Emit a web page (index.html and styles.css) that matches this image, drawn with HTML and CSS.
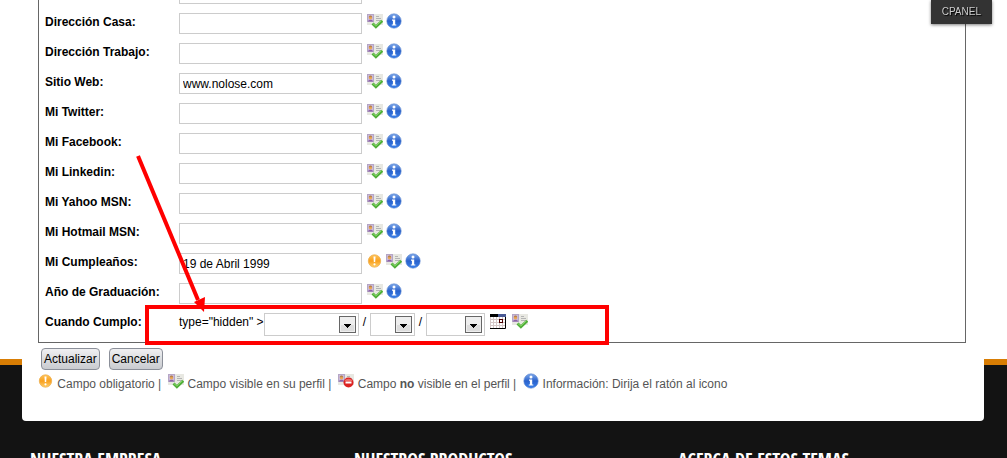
FILE: index.html
```html
<!DOCTYPE html>
<html lang="es">
<head>
    <meta charset="UTF-8">
    <meta name="viewport" content="width=device-width, initial-scale=1.0">
    <title>Editar perfil</title>
    <link rel="stylesheet" href="styles.css">
</head>
<body>

<!-- icons -->
<svg class="sprite" aria-hidden="true">
    <defs>
        <linearGradient id="blue" x1="0" y1="0" x2="0" y2="1">
            <stop offset="0" stop-color="#7fa9ea"/>
            <stop offset="0.5" stop-color="#2a62cc"/>
            <stop offset="1" stop-color="#3a80ea"/>
        </linearGradient>
        <linearGradient id="orange" x1="0" y1="0" x2="0" y2="1">
            <stop offset="0" stop-color="#ffc458"/>
            <stop offset="0.5" stop-color="#f9a01e"/>
            <stop offset="1" stop-color="#ffd06c"/>
        </linearGradient>
    </defs>
    <symbol id="info" viewBox="0 0 16 16">
        <circle cx="8" cy="8" r="7.2" fill="url(#blue)" stroke="#5c86cf" stroke-width="0.6"/>
        <circle cx="8" cy="4" r="1.5" fill="#fff"/>
        <path d="M6 6.6h3.2v4.8h1.1v1.2H5.8v-1.2h1.1V7.8H6z" fill="#fff"/>
    </symbol>
    <symbol id="required" viewBox="0 0 16 16">
        <circle cx="7.5" cy="8" r="6.2" fill="url(#orange)" stroke="#eeb052" stroke-width="0.8"/>
        <path d="M6.5 3.5h2l-.3 5.5H6.8z" fill="#fff"/>
        <circle cx="7.5" cy="11.3" r="1.1" fill="#fff"/>
    </symbol>
    <symbol id="card" viewBox="0 0 16 16">
        <rect width="16" height="11" y="1" fill="#e8e8e2"/>
        <rect x="0.5" y="1.5" width="6" height="7" fill="#cbbcdc" stroke="#b5a6c6"/>
        <path d="M1 8.5c0-2.4 5-2.4 5 0z" fill="#8d62a8"/>
        <circle cx="3.5" cy="4.8" r="1.7" fill="#eda854"/>
        <path d="M1.8 4.2c0-2.4 3.4-2.4 3.4 0z" fill="#b5804c"/>
        <path d="M9 3.5h3M9 5.5h5M9 7.5h5" stroke="#b4b4b4"/>
    </symbol>
    <symbol id="visible" viewBox="0 0 16 16">
        <use href="#card" width="16" height="16"/>
        <path d="M5.5 10.4l3.4 3.4 6.4-6" fill="none" stroke="#4fae38" stroke-width="2.8"/>
        <path d="M6 10.6l2.9 2.4 5.6-5.4" fill="none" stroke="#86d568" stroke-width="1"/>
    </symbol>
    <symbol id="hidden-field" viewBox="0 0 16 16">
        <use href="#card" width="16" height="16"/>
        <circle cx="10.5" cy="9.5" r="5" fill="#dc2222"/>
        <path d="M6.5 8c1-3 7-3 8 0z" fill="#ee6a64"/>
        <rect x="7.5" y="8.5" width="6" height="2" fill="#fff"/>
    </symbol>
    <symbol id="calendar" viewBox="0 0 16 16">
        <rect width="16" height="16" fill="#fff"/>
        <path d="M0 6.5h16M0 9.5h16M0 12.5h16M.5 4v11M3.5 4v11M6.5 4v11M9.5 4v11M12.5 4v11" stroke="#d6c8c8"/>
        <rect y="1" width="8" height="3" fill="#000"/>
        <rect x="8" y="1" width="8" height="3" fill="#4a5a94"/>
        <path d="M15.5 4v11.5H0" fill="none" stroke="#000"/>
        <rect x="9.5" y="6.5" width="3" height="3" fill="#fff" stroke="#4c0000"/>
    </symbol>
</svg>

<a class="cpanel" href="#">CPANEL</a>

<main class="page">
    <form class="profile">
        <div class="fields">
            <div class="row"><span></span><input type="text" aria-label="Dirección"></div>
            <div class="row">
                <label for="casa">Dirección Casa:</label>
                <input type="text" id="casa">
                <svg class="icon"><use href="#visible"/></svg>
                <svg class="icon"><use href="#info"/></svg>
            </div>
            <div class="row">
                <label for="trabajo">Dirección Trabajo:</label>
                <input type="text" id="trabajo">
                <svg class="icon"><use href="#visible"/></svg>
                <svg class="icon"><use href="#info"/></svg>
            </div>
            <div class="row">
                <label for="web">Sitio Web:</label>
                <input type="text" id="web" value="www.nolose.com">
                <svg class="icon"><use href="#visible"/></svg>
                <svg class="icon"><use href="#info"/></svg>
            </div>
            <div class="row">
                <label for="twitter">Mi Twitter:</label>
                <input type="text" id="twitter">
                <svg class="icon"><use href="#visible"/></svg>
                <svg class="icon"><use href="#info"/></svg>
            </div>
            <div class="row">
                <label for="facebook">Mi Facebook:</label>
                <input type="text" id="facebook">
                <svg class="icon"><use href="#visible"/></svg>
                <svg class="icon"><use href="#info"/></svg>
            </div>
            <div class="row">
                <label for="linkedin">Mi Linkedin:</label>
                <input type="text" id="linkedin">
                <svg class="icon"><use href="#visible"/></svg>
                <svg class="icon"><use href="#info"/></svg>
            </div>
            <div class="row">
                <label for="yahoo">Mi Yahoo MSN:</label>
                <input type="text" id="yahoo">
                <svg class="icon"><use href="#visible"/></svg>
                <svg class="icon"><use href="#info"/></svg>
            </div>
            <div class="row">
                <label for="hotmail">Mi Hotmail MSN:</label>
                <input type="text" id="hotmail">
                <svg class="icon"><use href="#visible"/></svg>
                <svg class="icon"><use href="#info"/></svg>
            </div>
            <div class="row">
                <label for="cumple">Mi Cumpleaños:</label>
                <input type="text" id="cumple" value="19 de Abril 1999">
                <svg class="icon"><use href="#required"/></svg>
                <svg class="icon"><use href="#visible"/></svg>
                <svg class="icon"><use href="#info"/></svg>
            </div>
            <div class="row">
                <label for="graduacion">Año de Graduación:</label>
                <input type="text" id="graduacion">
                <svg class="icon"><use href="#visible"/></svg>
                <svg class="icon"><use href="#info"/></svg>
            </div>
            <div class="row">
                <label for="dia">Cuando Cumplo:</label>
                <div class="date">
                    <span class="stray">type="hidden" &gt;</span>
                    <select class="day" id="dia"><option></option></select>
                    <span class="slash">/</span>
                    <select class="month" aria-label="Mes"><option></option></select>
                    <span class="slash">/</span>
                    <select class="year" aria-label="Año"><option></option></select>
                </div>
                <svg class="icon"><use href="#calendar"/></svg>
                <svg class="icon wide"><use href="#visible"/></svg>
            </div>
        </div>

        <div class="actions">
            <button type="submit">Actualizar</button>
            <button type="button">Cancelar</button>
        </div>

        <p class="legend">
            <span><svg class="icon"><use href="#required"/></svg> Campo obligatorio |</span>
            <span><svg class="icon"><use href="#visible"/></svg> Campo visible en su perfil |</span>
            <span><svg class="icon"><use href="#hidden-field"/></svg> Campo <strong>no</strong> visible en el perfil |</span>
            <span><svg class="icon"><use href="#info"/></svg> Información: Dirija el ratón al icono</span>
        </p>
    </form>

    <!-- red marks over the form -->
    <svg class="marks" width="470" height="200" viewBox="0 0 470 200" aria-hidden="true">
        <rect x="12" y="154" width="460" height="36" fill="none" stroke="#f00" stroke-width="4"/>
        <path d="M3 3L63 147" stroke="#f00" stroke-width="4"/>
        <path d="M59 149l11-5-1 15z" fill="#f00"/>
    </svg>
</main>

<footer class="footer">
    <h2>NUESTRA EMPRESA</h2>
    <h2>NUESTROS PRODUCTOS</h2>
    <h2>ACERCA DE ESTOS TEMAS</h2>
</footer>

</body>
</html>
```
FILE: styles.css
```css
body {
    margin: 0;
    height: 100vh;
    overflow: hidden;
    background-color: #fff;
    color: #000;
    font-family: Arial, "Liberation Sans", sans-serif;
    font-size: 12px;
}
.sprite {
    position: absolute;
    width: 0;
    height: 0;
}
.cpanel {
    position: fixed;
    top: 0;
    right: 15px;
    z-index: 3;
    padding: 0 11px;
    background-color: #333;
    box-shadow: 0 1px 3px rgba(0, 0, 0, 0.5);
    color: #ccc;
    font-size: 10px;
    line-height: 24px;
    text-decoration: none;
    text-shadow: 1px 1px 1px #000;
}
.page {
    position: relative;
    z-index: 1;
    margin: 0 23px 0 22px;
    padding: 0 18px 27px 16px;
    background-color: #fff;
    border-radius: 0 0 4px 4px;
}
.fields {
    display: flex;
    flex-direction: column;
    gap: 9px;
    padding: 0 6px 6px;
    border: 1px solid #666;
    border-top: none;
}
.row {
    display: flex;
    align-items: flex-start;
    height: 21px;
}
.row:first-child {
    margin-top: -17px;
}
.row:last-child {
    height: 23px;
}
.row > :first-child {
    width: 134px;
    flex: none;
    line-height: 18px;
    font-weight: bold;
}
.row input {
    box-sizing: border-box;
    width: 183px;
    height: 21px;
    margin-right: 5px;
    padding: 1px 3px 0;
    border: 1px solid #ccc;
    background-color: #fff;
    font: inherit;
}
.icon {
    width: 16px;
    height: 16px;
    flex: none;
}
.row .icon + .icon {
    margin-left: 3px;
}
.row .icon.wide {
    margin-left: 6px;
}
.date {
    display: flex;
    margin-right: 5px;
}
.date span {
    line-height: 18px;
}
.stray {
    width: 85px;
    white-space: nowrap;
}
.slash {
    width: 11px;
    text-align: center;
}
.date select {
    appearance: none;
    height: 23px;
    border: 1px solid #ccc;
    border-radius: 0;
    background: #fff url("data:image/svg+xml,%3Csvg xmlns='http://www.w3.org/2000/svg' width='17' height='17'%3E%3Crect x='.5' y='.5' width='16' height='16' fill='%23eee' stroke='%23666'/%3E%3Crect x='2' y='9' width='13' height='6' fill='%23ddd'/%3E%3Cpath d='M5 8h7v1h-1v1h-1v1H9v1H8v-1H7v-1H6V9H5z'/%3E%3C/svg%3E") no-repeat right 2px center;
}
.day {
    width: 95px;
}
.month {
    width: 45px;
}
.year {
    width: 59px;
}
.actions {
    display: flex;
    gap: 9px;
    padding: 5px 3px 0;
}
.actions button {
    height: 22px;
    padding: 0 2px;
    border: 1px solid #8b8f99;
    border-radius: 4px;
    background: linear-gradient(#f0f0f2, #dcdde0 50%, #c9cbd0);
    color: #000;
    font: inherit;
}
.legend {
    display: flex;
    gap: 7px;
    margin: 3px 0 0;
    color: #555;
    line-height: 20px;
    white-space: nowrap;
}
.legend .icon {
    vertical-align: -1px;
}
.marks {
    position: absolute;
    top: 153px;
    left: 113px;
    overflow: visible;
    pointer-events: none;
}
.footer {
    display: grid;
    grid-template-columns: repeat(3, 1fr);
    height: 93px;
    margin-top: -62px;
    padding: 82px 5px 0 30px;
    border-top: 6px solid #d87d04;
    background-color: #131313;
}
.footer h2 {
    margin: 0;
    color: #fff;
    font-family: "Open Sans Condensed", "Liberation Sans Narrow", "Arial Narrow", sans-serif;
    font-size: 18px;
    font-weight: 300;
    line-height: 24px;
}
```
